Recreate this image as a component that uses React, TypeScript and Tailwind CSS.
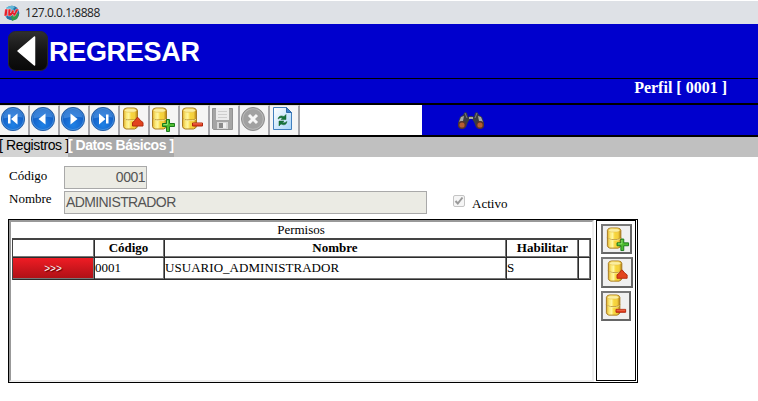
import React from "react";

type Mark = "plus" | "minus" | "edit";

function Database({ mark, size = 26 }: { mark: Mark; size?: number }) {
  return (
    <svg width={size} height={size} viewBox="0 0 26 26" className="block shrink-0">
      <defs>
        <linearGradient id="gold" x1="0" x2="1">
          <stop offset="0" stopColor="#dfae2c" />
          <stop offset=".2" stopColor="#fbe875" />
          <stop offset=".38" stopColor="#fff6a0" />
          <stop offset=".55" stopColor="#f8d63c" />
          <stop offset=".8" stopColor="#f3cf3e" />
          <stop offset="1" stopColor="#b07c10" />
        </linearGradient>
      </defs>
      <g transform={mark === "edit" ? "translate(1 0)" : undefined}>
        <path d="M2.500 11v8.500q0 1.500 2.500 2.500h8.500q2.500-.7 3-2.500V11z" fill="url(#gold)" stroke="#a97c22" />
        <path d="M2.500 3.500v7.500q1 2 4 2h6q3 0 4-2V3.500Q16 1 13 1H6Q3 1 2.500 3.500z" fill="url(#gold)" stroke="#a97c22" />
        <path d="M3.500 3.500Q4 1.700 6.500 1.700h6q2.500 0 3 1.800-1 1.700-3 1.700h-6q-2 0-3-1.700z" fill="#fbeea0" stroke="#e5c14c" strokeWidth=".6" />
        <path d="M3.500 12q1.500 1.600 4 1.600h4.500q2.500 0 4-1.600" fill="none" stroke="#fdf3a4" strokeWidth=".8" />
      </g>
      {mark === "plus" && (
        <>
          <path d="M16.500 12.500h3v4h5v3h-5v5h-3v-5h-4v-3h4z" fill="#4fbd31" stroke="#1a7a1c" />
          <path d="M17.500 13.500v4h-4" fill="none" stroke="#a0ec7c" strokeWidth=".8" />
        </>
      )}
      {mark === "minus" && (
        <>
          <path d="M12.500 16h10v3h-10z" fill="#e5401f" stroke="#b1260f" />
          <path d="M13 16.800h9" stroke="#f5876a" strokeWidth=".7" />
        </>
      )}
      {mark === "edit" && (
        <path d="M12.500 19v-3.500l2.500-2 2-3h1l2.500 3 2.500 2V19z" fill="#e2441e" stroke="#b32b10" />
      )}
    </svg>
  );
}

type Nav = "first" | "prev" | "next" | "last";
const navPaths: Record<Nav, string> = {
  first: "M7.500 8h2.500v9H7.500zM17 7v11l-6.500-5.500z",
  prev: "M15 7v11l-7-5.500z",
  next: "M10 7v11l7-5.500z",
  last: "M15.500 8H18v9h-2.500zM8.500 7v11l6.500-5.500z",
};

function NavIcon({ kind }: { kind: Nav }) {
  return (
    <svg width="26" height="26" viewBox="-.5 .5 26 26" className="block shrink-0">
      <defs>
        <radialGradient id="navblue" cx=".5" cy=".75" r=".75">
          <stop offset="0" stopColor="#1f82e6" />
          <stop offset=".6" stopColor="#1463ca" />
          <stop offset="1" stopColor="#0f50ae" />
        </radialGradient>
      </defs>
      <circle cx="12.500" cy="12.500" r="11.600" fill="url(#navblue)" stroke="#2b62a8" strokeWidth="1" />
      <circle cx="12.500" cy="12.500" r="10.600" fill="none" stroke="#4c96e0" strokeWidth=".8" />
      <path d="M3 12a9.500 9.500 0 0 1 19-1q-9-2-19 1z" fill="#68adf1" opacity=".45" />
      <path d={navPaths[kind]} fill="#fff" />
    </svg>
  );
}

function SaveIcon() {
  return (
    <svg width="26" height="26" viewBox="0 0 26 26" className="block shrink-0">
      <path d="M2.500 1.500h20v21h-19l-1-1z" fill="#a5a5a5" stroke="#929292" />
      <path d="M6 1h13v12H6z" fill="#ececec" />
      <path d="M8 4.500h9M8 7.500h9M8 10.500h9" stroke="#cecece" />
      <path d="M7 15h11v7H7z" fill="#d8d8d8" />
      <path d="M9 16h4v5H9z" fill="#8b8b8b" />
      <path d="M13 16h3v5h-3z" fill="#f1f1f1" />
    </svg>
  );
}

function CancelIcon() {
  return (
    <svg width="26" height="26" viewBox="-.5 .5 26 26" className="block shrink-0">
      <circle cx="12.500" cy="12.500" r="11.500" fill="#a1a1a1" stroke="#8d8d8d" />
      <circle cx="12.500" cy="12.500" r="10.300" fill="none" stroke="#bababa" />
      <path d="M8.500 8.500l8 8m0-8l-8 8" stroke="#f6f6f6" strokeWidth="3" />
    </svg>
  );
}

function RefreshIcon() {
  return (
    <svg width="26" height="26" viewBox="0 0 26 26" className="block shrink-0">
      <defs>
        <linearGradient id="page" x2="1" y2="1">
          <stop stopColor="#fff" />
          <stop offset="1" stopColor="#a8d5fa" />
        </linearGradient>
      </defs>
      <path d="M3.500 .5h13l5 5v17h-18z" fill="url(#page)" stroke="#417fbe" />
      <path d="M16.500 .5v5h5z" fill="#3e84cb" stroke="#2e69aa" />
      <path d="M8 12q1-4.500 6-2.500l2-2v5h-5l1.500-1.500q-2-1-4.500 1zM17 14.500q-1 5-6 2.500l-2 2v-5h5L12.500 15.500q2 1 4.500-1z" fill="#14733a" stroke="#14632f" strokeWidth=".5" />
    </svg>
  );
}

const toolbarItems = [
  { name: "Primero", icon: <NavIcon kind="first" /> },
  { name: "Anterior", icon: <NavIcon kind="prev" /> },
  { name: "Siguiente", icon: <NavIcon kind="next" /> },
  { name: "Último", icon: <NavIcon kind="last" /> },
  { name: "Editar", icon: <Database mark="edit" /> },
  { name: "Agregar", icon: <Database mark="plus" /> },
  { name: "Eliminar", icon: <Database mark="minus" /> },
  { name: "Guardar", icon: <SaveIcon /> },
  { name: "Cancelar", icon: <CancelIcon /> },
  { name: "Actualizar", icon: <RefreshIcon /> },
];

function Binoculars() {
  return (
    <svg width="28" height="20" viewBox="0 0 28 20" className="block">
      <path d="M1 12L3 6l3-2 2-3 2 1 1 4 2-1h2l2 1 1-4 2-1 2 3 3 2 2 6v3l-4 3-4-2-2-5-2-3h-2l-2 3-2 5-4 2-4-3z" fill="#393c42" />
      <path d="M4 6l3-1-1 5-4 1zM21 5l3 1 2 5-4-1zM12 6h4v2h-4z" fill="#a5a6a3" />
      <path d="M8 2l2 5M20 2l-2 5" stroke="#77787c" />
      <circle cx="5" cy="14" r="4" fill="#55352a" />
      <circle cx="23" cy="14" r="4" fill="#55352a" />
      <circle cx="5" cy="14" r="2.600" fill="#b65d30" />
      <circle cx="23" cy="14" r="2.600" fill="#b65d30" />
    </svg>
  );
}

function Favicon() {
  return (
    <svg width="16" height="16" viewBox="0 0 16 16" className="block">
      <circle cx="8" cy="8" r="7.300" fill="#2373a8" />
      <path d="M2 3q5-4 9-1L8 5 2 7z" fill="#64b8d8" />
      <path d="M7 11l6-3 2 1-2 5-5 2z" fill="#37984d" />
      <path d="M1 4h3L3 11H0zM4 4h3l-.5 4L8 5h2v3l2-4h3l-4 7H9V9l-2 2H4z" fill="#e61f2b" stroke="#fff" strokeWidth=".4" />
    </svg>
  );
}

const cell = "border-r border-b border-[#2b2b2b] shadow-[inset_-1px_-1px_0_#777]";
const heading = `${cell} text-center font-bold`;
const sideButton =
  "shrink-0 overflow-hidden border-2 border-b-[#666] border-l-[#777] border-r-[#666] border-t-[#777] bg-[#f0f0f0]";
const textField =
  "h-[23px] border border-[#a9a9a9] bg-[#ebebe4] font-['Liberation_Sans',sans-serif] text-[14px] leading-[21px] text-[#545454]";

export default function App() {
  return (
    <main className="h-[401px] w-[758px] overflow-hidden bg-white font-['Liberation_Serif',serif] text-[13px] text-black">
      <div className="flex h-6 items-center border-t border-white bg-[#dee1e6] pl-1 font-['Open_Sans',sans-serif] text-[12px] text-[#222]">
        <Favicon />
        <span className="ml-[5px] tracking-[-0.45px]">127.0.0.1:8888</span>
      </div>
      <header className="flex h-[55px] items-center border-b border-black bg-[#0000cd] pl-2 text-white">
        <svg width="40" height="40" viewBox="0 0 40 40" className="block">
          <defs>
            <linearGradient id="back" x2="0" y2="1">
              <stop stopColor="#303030" />
              <stop offset=".5" stopColor="#151515" />
              <stop offset="1" stopColor="#080808" />
            </linearGradient>
          </defs>
          <rect x=".5" y=".5" width="39" height="39" rx="7" fill="url(#back)" stroke="#2a2a2a" />
          <path d="M10 20L26.500 6V34z" fill="#fff" stroke="#fff" strokeWidth="1.500" strokeLinejoin="round" />
        </svg>
        <span className="pl-px pt-[2px] font-['Liberation_Sans',sans-serif] text-[27px] font-bold leading-none tracking-[-0.3px]">REGRESAR</span>
      </header>
      <div className="flex h-[26px] justify-end border-b-2 border-black bg-[#0000cd] pr-[31px] text-[16px] font-bold leading-[18px] text-white">
        Perfil [ 0001 ]
      </div>
      <div className="flex h-8 border-b-2 border-black bg-[#0000cd]">
        <div className="flex w-[422px] bg-white">
          {toolbarItems.map((item) => (
            <button key={item.name} aria-label={item.name} className="h-[30px] w-[30px] shrink-0 overflow-hidden border-r-2 border-t border-[#a5a5aa] border-t-[#ddd] bg-[#f5f5f5] pb-[2px] pt-px">
              {item.icon}
            </button>
          ))}
        </div>
        <div className="ml-[35px] pt-[6px]"><Binoculars /></div>
      </div>
      <nav className="flex h-5 bg-[#c0c0c0] font-['Liberation_Sans',sans-serif] text-[14px] leading-4">
        <div className="w-[68px] whitespace-nowrap bg-[#d3d3d3]"><span className="-ml-px tracking-[-0.38px]">[ Registros ]</span></div>
        <div className="w-[106px] whitespace-nowrap bg-[#a9a9a9] font-bold tracking-[-0.47px] text-white">[ Datos Básicos ]</div>
      </nav>
      <section className="h-[62px] pt-[9px]">
        <div className="flex h-[25px] pl-[9px]">
          <label className="w-[55px]">Código</label>
          <div className={`${textField} w-[83px] pr-px text-right tracking-[-0.5px]`}>0001</div>
        </div>
        <div className="flex h-[25px] pl-[9px]">
          <label className="w-[55px] leading-4">Nombre</label>
          <div className={`${textField} w-[363px] pl-px tracking-[-0.6px]`}>ADMINISTRADOR</div>
          <div className="ml-[26px] mt-1 flex size-3 items-center justify-center rounded-[2px] border border-[#c4c4c4] bg-[#f5f5f5]">
            <svg width="10" height="10" viewBox="0 0 10 10"><path d="M1.500 5l2.300 2.500L8.500 1.500" fill="none" stroke="#999" strokeWidth="2" /></svg>
          </div>
          <span className="ml-[7px] pt-[3px]">Activo</span>
        </div>
      </section>
      <section className="ml-2 flex h-[164px] w-[630px] border border-black">
        <div className="w-[585px] border-2 border-b-[#eee] border-l-[#999] border-r-[#eee] border-t-[#999]">
          <h2 className="h-4 pr-[1px] text-center leading-4">Permisos</h2>
          <div className="ml-px grid w-[579px] grid-cols-[82px_70px_342px_72px_12px] grid-rows-[18px_22px] border-l border-t-2 border-[#444] leading-4">
            <div className={cell} />
            <div className={`${heading} pr-[2px]`}>Código</div>
            <div className={`${heading} pr-px`}>Nombre</div>
            <div className={heading}>Habilitar</div>
            <div className={cell} />
            <button className={`${cell} bg-gradient-to-b from-[#ef1c24] to-[#ad1016] pr-px text-center font-['Liberation_Sans',sans-serif] text-[10px] text-white [text-shadow:1px_1px_1px_#500]`}>&gt;&gt;&gt;</button>
            <div className={`${cell} pt-[2px]`}>0001</div>
            <div className={`${cell} pt-[2px] tracking-[0.04px]`}>USUARIO_ADMINISTRADOR</div>
            <div className={`${cell} pt-[2px]`}>S</div>
            <div className={cell} />
          </div>
        </div>
        <aside className="ml-[2px] flex h-[161px] w-10 flex-col gap-[3px] border border-black pl-1 pt-[3px]">
          <button aria-label="Agregar permiso" className={`${sideButton} h-[30px] w-[31px] pl-[2px]`}><Database mark="plus" size={25} /></button>
          <button aria-label="Editar permiso" className={`${sideButton} h-[31px] w-8 pl-[2px]`}><Database mark="edit" size={25} /></button>
          <button aria-label="Eliminar permiso" className={`${sideButton} h-[30px] w-[30px] pl-px`}><Database mark="minus" size={25} /></button>
        </aside>
      </section>
    </main>
  );
}
